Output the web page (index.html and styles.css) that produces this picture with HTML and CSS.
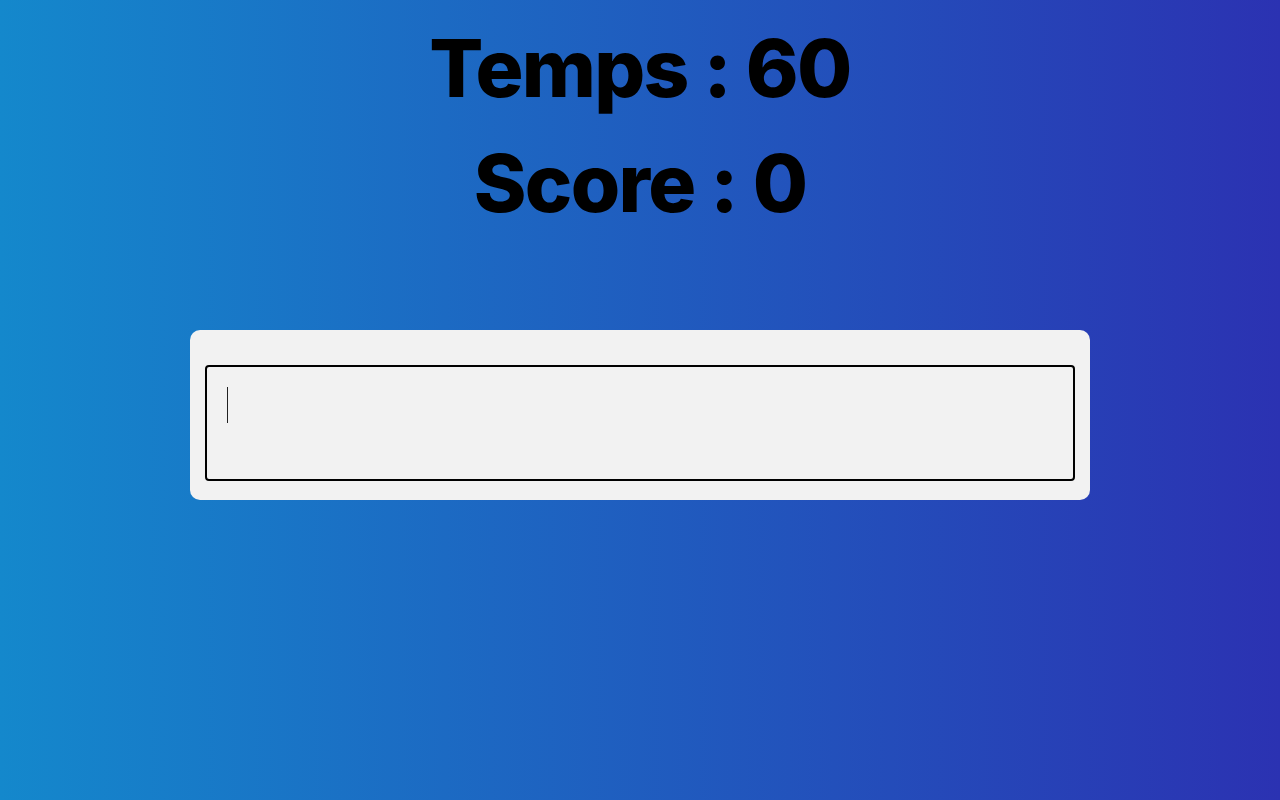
FILE: index.html
```html
<!DOCTYPE html>
<html lang="fr">
<head>
<meta charset="utf-8">
<title>Jeu de frappe</title>
<link rel="stylesheet" href="styles.css">
</head>
<body>
<main class="page">
  <h1 class="stat">Temps : 60</h1>
  <h1 class="stat">Score : 0</h1>
  <div class="card">
    <div class="field">
      <textarea class="input" autofocus></textarea>
    </div>
  </div>
</main>
</body>
</html>
```
FILE: styles.css
```css
html, body {
  margin: 0;
  height: 100%;
}
body {
  background: linear-gradient(to right, #1488cc, #2b32b2);
  font-family: Inter, "Noto Sans", sans-serif;
  color: #000;
}
.page {
  display: flex;
  flex-direction: column;
  align-items: center;
  padding-top: 10px;
}
.stat {
  margin: 0;
  font-size: 80px;
  font-weight: 800;
  line-height: 115px;
  letter-spacing: -1.7px;
}
.card {
  margin-top: 90px;
  width: 900px;
  box-sizing: border-box;
  padding: 35px 15px 19px;
  background: #f2f2f2;
  border-radius: 10px;
  display: flex;
}
.field {
  flex: 1;
  position: relative;
  display: flex;
}
.field::after {
  content: "";
  position: absolute;
  left: 22px;
  top: 22px;
  width: 1px;
  height: 36px;
  background: #222;
  pointer-events: none;
}
.input {
  flex: 1;
  height: 116px;
  box-sizing: border-box;
  margin: 0;
  padding: 20px;
  border: 2px solid #000;
  border-radius: 4px;
  background: transparent;
  font-family: Inter, "Noto Sans", sans-serif;
  font-size: 30px;
  resize: none;
  outline: none;
  caret-color: transparent;
}
```
